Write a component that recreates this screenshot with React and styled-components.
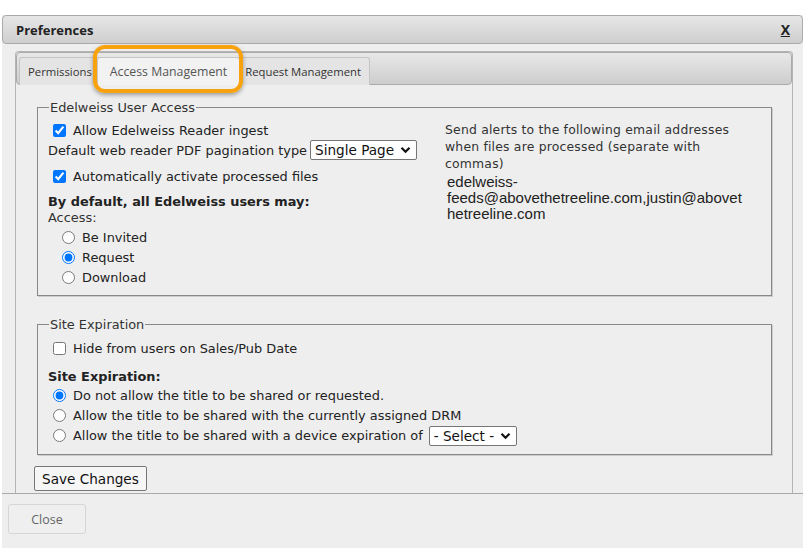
import React from "react";
import styled, { createGlobalStyle, css } from "styled-components";

const GlobalStyle = createGlobalStyle`
  body {
    margin: 0;
    background: #fff;
    font-family: "DejaVu Sans", Verdana, sans-serif;
  }
`;

const Dialog = styled.div`
  margin: 15px 0 0 2px;
  width: 801px;
  height: 533px;
  background: #eeeeee;
  display: flex;
  flex-direction: column;
`;

const TitleBar = styled.div`
  height: 27px;
  flex-shrink: 0;
  border: 1px solid #aaa;
  border-radius: 4px;
  background: linear-gradient(#e6e6e6, #cfcfcf);
  display: flex;
  align-items: center;
  justify-content: space-between;
  padding: 0 12px 0 13px;
  font-family: "Open Sans", sans-serif;
  font-weight: bold;
  font-size: 13px;
  color: #222;
`;

const CloseX = styled.span`
  text-decoration: underline;
  font-size: 14px;
`;

const Body = styled.div`
  height: 442px;
  flex-shrink: 0;
  overflow: hidden;
  padding: 7px 10px 0 13px;
`;

const TabWidget = styled.div`
  position: relative;
  border: 1px solid #b5b5b5;
  border-bottom: none;
  border-radius: 4px 4px 0 0;
  height: 470px;
`;

const TabNav = styled.div`
  height: 31px;
  border: 1px solid #aaa;
  border-radius: 4px;
  background: linear-gradient(#e8e8e8, #cdcdcd);
  display: flex;
  align-items: flex-end;
  padding-left: 2px;
`;

const Tab = styled.div`
  position: relative;
  height: 27px;
  margin-bottom: -1px;
  padding: 0 8px;
  border: 1px solid #c5c5c5;
  border-bottom: none;
  border-radius: 3px 3px 0 0;
  background: #e4e4e4;
  display: flex;
  align-items: center;
  font-family: "Open Sans", sans-serif;
  font-size: 11.3px;
  color: #333;
  ${(p) =>
    p.active &&
    css`
      z-index: 1;
      margin: 0 -4px -1px -4px;
      padding: 0 12px;
      font-size: 12.3px;
      background: #f2f2f2;
      color: #555;
    `}
`;

const Highlight = styled.div`
  position: absolute;
  left: 77px;
  top: -7px;
  width: 142px;
  height: 40px;
  z-index: 2;
  border: 4px solid #f7a20e;
  border-radius: 12px;
  box-shadow: 0 2px 4px rgba(0, 0, 0, 0.35);
  pointer-events: none;
`;

const Panel = styled.div`
  padding: 15px 20px 0 21px;
  font-size: 12.9px;
  color: #222;
`;

const FieldSet = styled.fieldset`
  margin: 0 0 ${(p) => p.mb || 0}px 0;
  padding: 5px 10px 8px 10px;
  border: 1px solid #888;
  box-shadow: 1px 1px 0 #ccc;
  legend {
    padding: 0 1px;
    margin-left: 1px;
    color: #333;
  }
`;

const Columns = styled.div`
  display: flex;
  justify-content: space-between;
`;

const Left = styled.div`
  display: flex;
  flex-direction: column;
`;

const Right = styled.div`
  width: 316px;
  padding-top: 1px;
  font-size: 12.4px;
  letter-spacing: 0.2px;
  line-height: 17px;
  color: #333;
`;

const Email = styled.div`
  margin-top: 2px;
  padding-left: 2px;
  font-family: "Liberation Sans", Arial, sans-serif;
  font-size: 15px;
  letter-spacing: 0;
  line-height: 16px;
  color: #222;
`;

const Line = styled.label`
  display: flex;
  align-items: center;
  height: ${(p) => p.h || 20}px;
  padding-left: ${(p) => p.indent || 0}px;
  input {
    margin: 0 7px 0 5px;
    width: 13px;
    height: 13px;
    accent-color: #0075ff;
  }
`;

const Text = styled.div`
  height: ${(p) => p.h || 17}px;
  display: flex;
  align-items: center;
  font-weight: ${(p) => (p.bold ? "bold" : "normal")};
  color: ${(p) => (p.bold ? "#222" : "#333")};
  margin-top: ${(p) => p.mt || 0}px;
`;

const RadioGroup = styled.div`
  margin-top: 1px;
  display: flex;
  flex-direction: column;
`;

const Select = styled.div`
  display: inline-flex;
  align-items: center;
  gap: 6px;
  height: 18px;
  margin-left: ${(p) => p.gap || 6}px;
  padding: 0 5px 0 4px;
  border: 1px solid #767676;
  border-radius: 2px;
  background: #fff;
  font-size: 13.6px;
  color: #111;
`;

const SaveButton = styled.button`
  margin: 11px 0 0 -3px;
  height: 25px;
  padding: 0 7px;
  border: 1px solid #777;
  border-radius: 2px;
  background: #f6f6f6;
  font-family: "DejaVu Sans", sans-serif;
  font-size: 13.6px;
  color: #111;
`;

const Footer = styled.div`
  border-top: 1px solid #a9a9a9;
  padding: 10px 0 0 6px;
`;

const CloseButton = styled.button`
  width: 78px;
  height: 30px;
  border: 1px solid #d6d6d6;
  border-radius: 3px;
  background: #efefef;
  font-family: "Open Sans", sans-serif;
  font-size: 12.5px;
  color: #666;
`;

const Chevron = () => (
  <svg width="11" height="8" viewBox="0 0 11 8">
    <path d="M1.5 1.8 L5.5 5.8 L9.5 1.8" fill="none" stroke="#111" strokeWidth="2.2" />
  </svg>
);

export default function App() {
  return (
    <>
      <GlobalStyle />
      <Dialog>
        <TitleBar>
          <span>Preferences</span>
          <CloseX>X</CloseX>
        </TitleBar>
        <Body>
          <TabWidget>
            <TabNav>
              <Tab>Permissions</Tab>
              <Tab active>Access Management</Tab>
              <Tab>Request Management</Tab>
            </TabNav>
            <Highlight />
            <Panel>
              <FieldSet mb={21}>
                <legend>Edelweiss User Access</legend>
                <Columns>
                  <Left>
                    <Line>
                      <input type="checkbox" defaultChecked />
                      Allow Edelweiss Reader ingest
                    </Line>
                    <Line h={20}>
                      Default web reader PDF pagination type
                      <Select gap={3}>
                        Single Page <Chevron />
                      </Select>
                    </Line>
                    <Line h={33}>
                      <input type="checkbox" defaultChecked />
                      Automatically activate processed files
                    </Line>
                    <Text bold h={16}>By default, all Edelweiss users may:</Text>
                    <Text>Access:</Text>
                    <RadioGroup>
                      <Line indent={9}>
                        <input type="radio" name="acc" />
                        Be Invited
                      </Line>
                      <Line indent={9}>
                        <input type="radio" name="acc" defaultChecked />
                        Request
                      </Line>
                      <Line indent={9}>
                        <input type="radio" name="acc" />
                        Download
                      </Line>
                    </RadioGroup>
                  </Left>
                  <Right>
                    Send alerts to the following email addresses when files are processed (separate with commas)
                    <Email>
                      edelweiss-
                      <br />
                      feeds@abovethetreeline.com,justin@abovet
                      <br />
                      hetreeline.com
                    </Email>
                  </Right>
                </Columns>
              </FieldSet>
              <FieldSet>
                <legend>Site Expiration</legend>
                <Line h={22}>
                  <input type="checkbox" />
                  Hide from users on Sales/Pub Date
                </Line>
                <Text bold mt={9}>Site Expiration:</Text>
                <Line>
                  <input type="radio" name="exp" defaultChecked />
                  Do not allow the title to be shared or requested.
                </Line>
                <Line>
                  <input type="radio" name="exp" />
                  Allow the title to be shared with the currently assigned DRM
                </Line>
                <Line h={21}>
                  <input type="radio" name="exp" />
                  Allow the title to be shared with a device expiration of
                  <Select>
                    - Select - <Chevron />
                  </Select>
                </Line>
              </FieldSet>
              <SaveButton>Save Changes</SaveButton>
            </Panel>
          </TabWidget>
        </Body>
        <Footer>
          <CloseButton>Close</CloseButton>
        </Footer>
      </Dialog>
    </>
  );
}
